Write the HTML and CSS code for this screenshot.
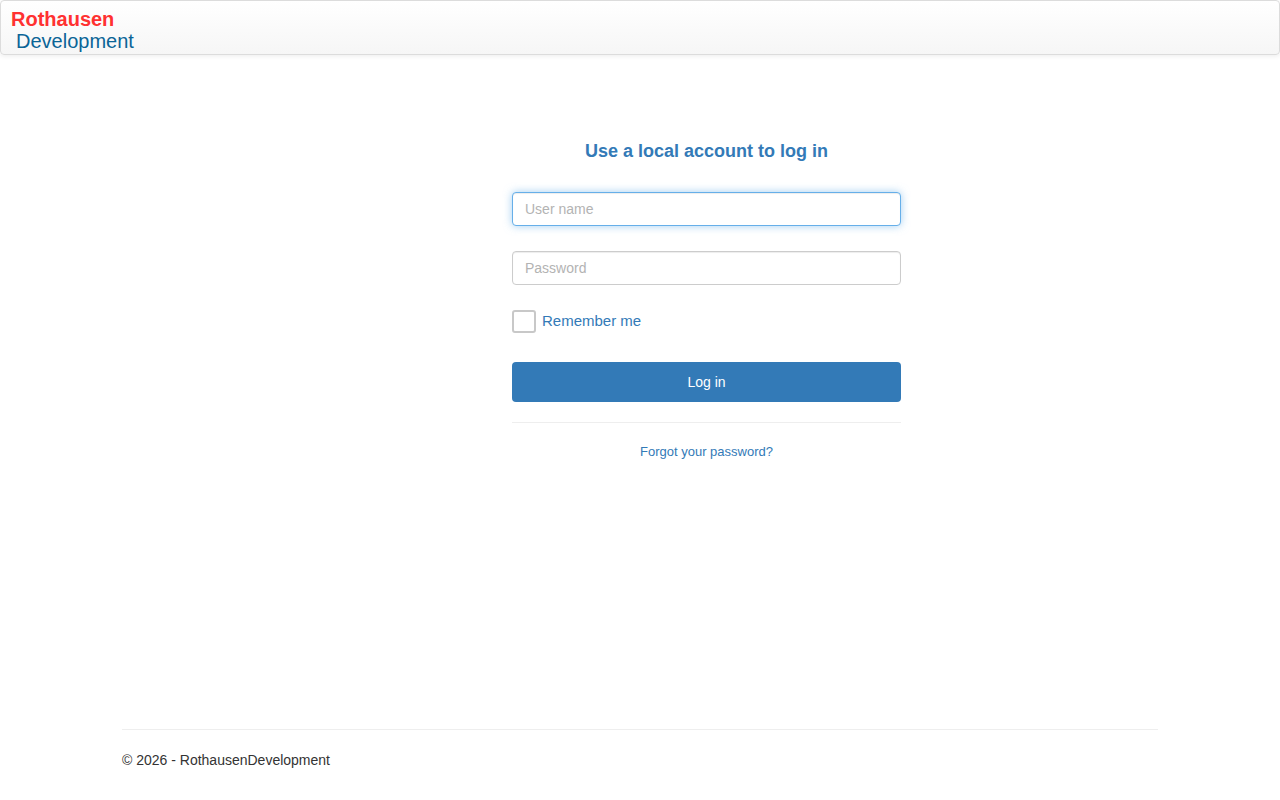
FILE: index.html
```html
<!DOCTYPE html>
<html lang="en">
<head>
  <meta charset="UTF-8" />
  <meta name="viewport" content="width=device-width, initial-scale=1" />
  <title>Log in - RothausenDevelopment</title>
  <link rel="stylesheet" href="styles.css">
</head>
<body>

  <nav class="navbar">
    <a class="brand" href="#">
      <span class="brand-top">Rothausen</span>
      <span class="brand-bottom">Development</span>
    </a>
  </nav>

  <div class="container">
    <section class="login">
      <h4>Use a local account to log in</h4>
      <form id="loginForm">
        <input type="text" class="form-control focused" placeholder="User name">
        <input type="password" class="form-control" placeholder="Password">
        <label class="remember">
          <span class="check"></span>
          <span class="remember-text">Remember me</span>
        </label>
        <button type="submit" class="btn-primary">Log in</button>
      </form>
      <hr>
      <p class="forgot"><a href="#">Forgot your password?</a></p>
    </section>
  </div>

  <footer class="footer">
    <hr>
    <p>&copy; 2026 - RothausenDevelopment</p>
  </footer>

</body>
</html>
```

FILE: styles.css
```css
body {
  font-family: 'Liberation Sans', Arial, sans-serif;
  font-size: 14px;
  color: #333;
  background-color: #fff;
  margin: 0;
}
.navbar {
  height: 53px;
  border: 1px solid #dcdcdc;
  border-radius: 4px;
  background-image: linear-gradient(to bottom, #fff 0, #f6f6f6 100%);
  box-shadow: inset 0 1px 0 rgba(255,255,255,0.15), 0 1px 5px rgba(0,0,0,0.08);
}
.brand {
  display: inline-block;
  padding: 7px 0 0 10px;
  text-decoration: none;
  font-size: 20px;
  line-height: 22px;
}
.brand-top {
  display: block;
  color: #ff3131;
  font-weight: bold;
}
.brand-bottom {
  display: block;
  color: #0b6597;
  padding-left: 5px;
}
.container {
  width: 1036px;
  margin: 0 auto;
  height: 674px;
}
.login {
  width: 389px;
  margin-left: 390px;
  padding-top: 85px;
}
h4 {
  color: #337ab7;
  font-size: 18px;
  font-weight: bold;
  text-align: center;
  margin: 0 0 30px;
  line-height: 22px;
}
form {
  display: flex;
  flex-direction: column;
}
.form-control {
  box-sizing: border-box;
  height: 34px;
  padding: 6px 12px;
  font-family: inherit;
  font-size: 14px;
  color: #555;
  border: 1px solid #ccc;
  border-radius: 4px;
  margin-bottom: 25px;
  box-shadow: inset 0 1px 1px rgba(0,0,0,0.075);
}
.form-control::placeholder {
  color: #b3b3b3;
}
.focused {
  border-color: #66afe9;
  outline: 0;
  box-shadow: inset 0 1px 1px rgba(0,0,0,0.075), 0 0 8px rgba(102,175,233,0.6);
}
.remember {
  display: flex;
  align-items: center;
  gap: 6px;
  color: #337ab7;
  font-size: 15px;
  margin-bottom: 29px;
}
.remember-text {
  padding-bottom: 2px;
}
.check {
  box-sizing: border-box;
  width: 24px;
  height: 23px;
  border: 2px solid #c8c8c8;
  border-radius: 3px;
  background: #fff;
}
.btn-primary {
  height: 40px;
  background-color: #337ab7;
  color: white;
  border: none;
  border-radius: 4px;
  font-family: inherit;
  font-size: 14px;
  cursor: pointer;
}
.btn-primary:hover {
  background-color: #286090;
}
hr {
  border: 0;
  border-top: 1px solid #eee;
  margin: 20px 0 21px;
}
.forgot {
  text-align: center;
  font-size: 13px;
  margin: 0;
}
.forgot a {
  color: #337ab7;
  text-decoration: none;
}
.footer {
  width: 1036px;
  margin: 0 auto;
}
.footer hr {
  margin: 0 0 22px;
}
.footer p {
  margin: 0;
}
```
